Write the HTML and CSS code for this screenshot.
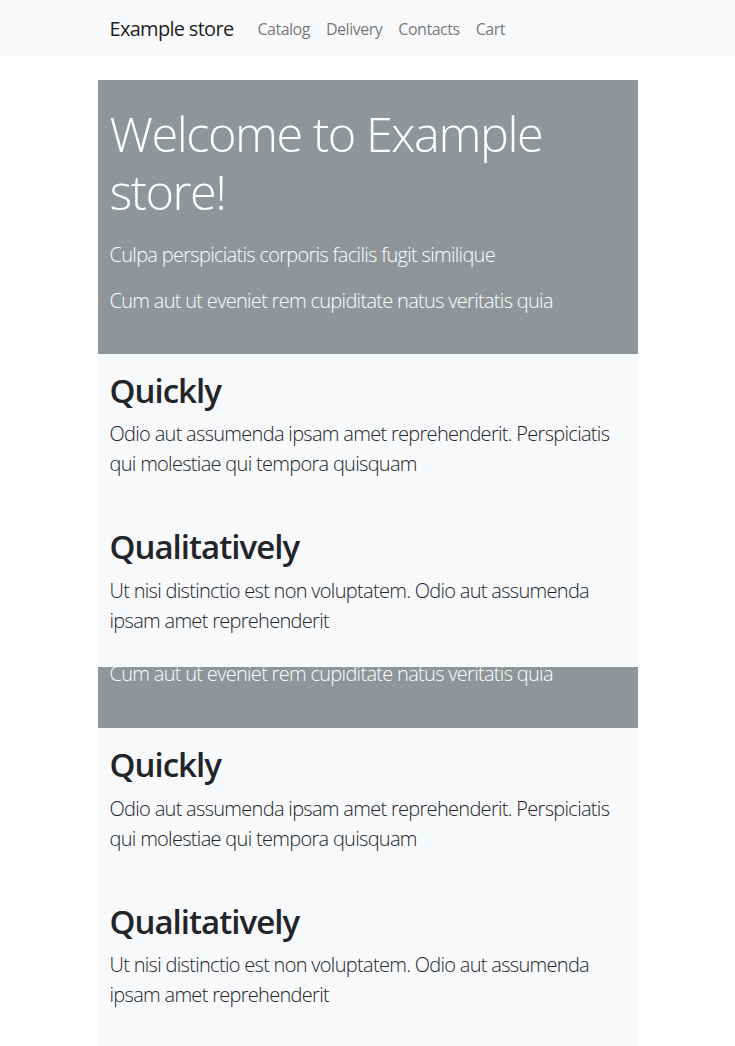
FILE: index.html
```html
<!DOCTYPE html>
<html lang="en">
<head>
<meta charset="utf-8">
<title>Example store</title>
<link rel="stylesheet" href="styles.css">
</head>
<body>
<nav class="navbar">
  <div class="container navbar-inner">
    <a class="brand" href="#">Example store</a>
    <ul class="nav">
      <li><a class="nav-link" href="#">Catalog</a></li>
      <li><a class="nav-link" href="#">Delivery</a></li>
      <li><a class="nav-link" href="#">Contacts</a></li>
      <li><a class="nav-link" href="#">Cart</a></li>
    </ul>
  </div>
</nav>
<main class="page">
  <section class="container hero">
    <h1 class="display">Welcome to Example store!</h1>
    <p class="lead">Culpa perspiciatis corporis facilis fugit similique</p>
    <p class="lead">Cum aut ut eveniet rem cupiditate natus veritatis quia</p>
  </section>
  <section class="container features">
    <div class="feature">
      <h2 class="feature-title">Quickly</h2>
      <p class="lead">Odio aut assumenda ipsam amet reprehenderit. Perspiciatis qui molestiae qui tempora quisquam</p>
    </div>
    <div class="feature">
      <h2 class="feature-title">Qualitatively</h2>
      <p class="lead">Ut nisi distinctio est non voluptatem. Odio aut assumenda ipsam amet reprehenderit</p>
    </div>
  </section>
  <section class="container hero hero-tail">
    <p class="lead">Cum aut ut eveniet rem cupiditate natus veritatis quia</p>
  </section>
  <section class="container features features-last">
    <div class="feature">
      <h2 class="feature-title">Quickly</h2>
      <p class="lead">Odio aut assumenda ipsam amet reprehenderit. Perspiciatis qui molestiae qui tempora quisquam</p>
    </div>
    <div class="feature">
      <h2 class="feature-title">Qualitatively</h2>
      <p class="lead">Ut nisi distinctio est non voluptatem. Odio aut assumenda ipsam amet reprehenderit</p>
    </div>
  </section>
</main>
</body>
</html>
```

FILE: styles.css
```css
* { box-sizing: border-box; }

body {
  margin: 0;
  font-family: "Open Sans", "Noto Sans", sans-serif;
  font-size: 16px;
  line-height: 1.5;
  color: #212529;
  background: #fff;
}

.container {
  width: 540px;
  margin: 0 auto;
  padding: 0 12px;
}

.navbar {
  background: #f8f9fa;
  padding: 9px 0 7px;
}

.navbar-inner {
  display: flex;
  align-items: center;
}

.brand {
  font-size: 20px;
  line-height: 30px;
  padding: 5px 0;
  margin-right: 16px;
  color: rgba(0, 0, 0, 0.9);
  text-decoration: none;
  letter-spacing: -0.035em;
}

.nav {
  display: flex;
  list-style: none;
  margin: 0;
  padding: 0;
}

.nav-link {
  display: block;
  padding: 8px;
  font-size: 16px;
  line-height: 24px;
  color: rgba(0, 0, 0, 0.55);
  text-decoration: none;
  letter-spacing: -0.03em;
}

.page {
  margin-top: 24px;
}

.hero {
  display: flow-root;
  background: #909599;
  color: #fff;
  padding-top: 24px;
  padding-bottom: 22px;
}

.display {
  margin: 0 0 19px;
  font-size: 48.65px;
  font-weight: 300;
  line-height: 1.2;
  letter-spacing: -0.03em;
}

.lead {
  margin: 0 0 16px;
  font-size: 20px;
  font-weight: 300;
  line-height: 30px;
  letter-spacing: -0.035em;
}

.hero-tail {
  padding-top: 0;
  padding-bottom: 23px;
}

.hero-tail .lead {
  margin-top: -8px;
}

.features {
  background: #f8f9fa;
}

.features-last {
  padding-bottom: 24px;
}

.feature {
  padding: 17px 0 15px;
}

.feature-title {
  margin: 0 0 9px;
  font-size: 33px;
  font-weight: 600;
  line-height: 1.2;
  letter-spacing: -0.03em;
  color: #212529;
}
```
